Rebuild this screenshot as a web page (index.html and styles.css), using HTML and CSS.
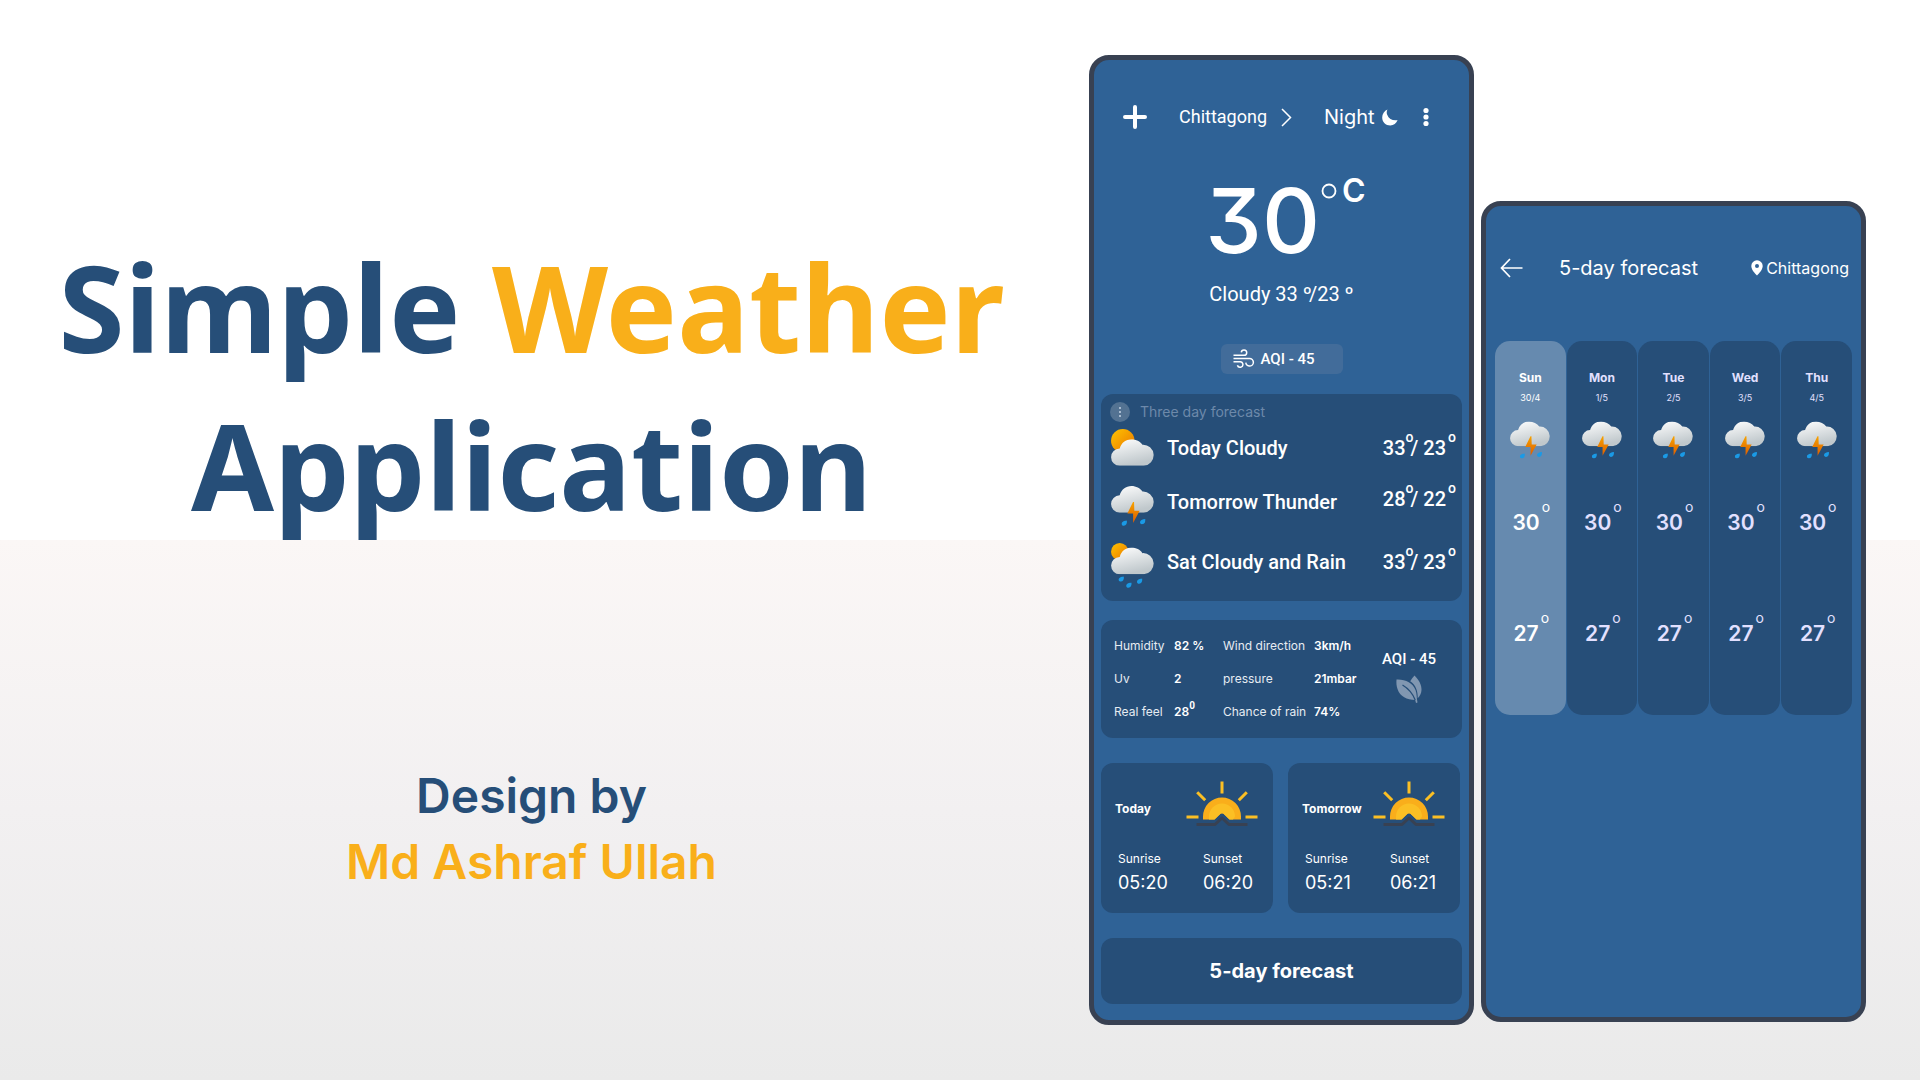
FILE: index.html
```html
<!DOCTYPE html>
<html lang="en">
<head>
<meta charset="utf-8">
<meta name="viewport" content="width=device-width, initial-scale=1">
<title>Simple Weather Application</title>
<link rel="stylesheet" href="styles.css">
</head>
<body>
<svg class="sprite" aria-hidden="true">
  <defs>
    <linearGradient id="cloud-fill" x1="0" y1="0" x2=".35" y2="1"><stop offset="0" stop-color="#ffffff"/><stop offset="1" stop-color="#c0c8cc"/></linearGradient>
    <linearGradient id="sun-fill" x1="0" y1="0" x2="1" y2="1"><stop offset="0" stop-color="#ffc400"/><stop offset=".7" stop-color="#ef8c00"/></linearGradient>
    <linearGradient id="bolt-fill" x1="0" y1="0" x2="0" y2="1"><stop offset="0" stop-color="#f7a300"/><stop offset="1" stop-color="#dc5c00"/></linearGradient>
  </defs>
  <symbol id="cloud" viewBox="0 0 42 26"><path fill="url(#cloud-fill)" d="M8.500 26A8.450 8.450 0 0 1 8.500 9.100C10 3.500 14.500 0 20 0c4.500 0 8.500 2.200 10.700 5.400A10.300 10.300 0 0 1 32 26z"/></symbol>
  <symbol id="drop" viewBox="0 0 6 6"><path fill="#1a9ae6" d="M5.800.2C6 3.500 4.900 5.800 2.500 5.800 1 5.800.1 4.800.1 3.600.1 1.700 2.500.4 5.800.2z"/></symbol>
  <symbol id="cloudy" viewBox="0 0 42 44"><circle cx="11.500" cy="11.500" r="11.500" fill="url(#sun-fill)"/><use href="#cloud" y="10" width="42" height="26"/></symbol>
  <symbol id="thunder" viewBox="0 0 42 39"><use href="#cloud" width="42" height="26"/><path fill="url(#bolt-fill)" d="M21.500 15.500 16 26.800h5.600V36L28 24.200h-5.200l-.3-8.700z"/><use href="#drop" x="10" y="33.500" width="6" height="5.500"/><use href="#drop" x="28" y="32" width="6" height="5.500"/></symbol>
  <symbol id="rain" viewBox="0 0 42 44"><circle cx="8.500" cy="8.500" r="8.500" fill="url(#sun-fill)"/><use href="#cloud" y="4.500" width="42" height="26"/><use href="#drop" x="7" y="32.500" width="6" height="5.500"/><use href="#drop" x="14.500" y="38.500" width="6" height="5.500"/><use href="#drop" x="25" y="34.500" width="6" height="5.500"/></symbol>
  <symbol id="sunrise" viewBox="0 0 72 46">
    <path fill="#f9ae1b" d="M17 38.500V35.500a19 19 0 0 1 38 0v3H43.500L37.500 32.800q-1.500-1.300-3 0L28.500 38.500z"/>
    <path fill="#fbbf24" d="M23 38.500V35.500a13 13 0 0 1 26 0l-2 3H43.500L37.500 32.800q-1.500-1.300-3 0L28.500 38.500z"/>
    <g fill="none" stroke="#fbbf24" stroke-width="3"><path d="M36 .5v12M11.200 11.200l8 8M60.800 11.200l-8 8M.5 36h12M59.500 36h12"/></g>
    <path fill="none" stroke="#384152" stroke-width="3" stroke-linejoin="round" d="M10.500 43.500H29l7-6.500 7 6.500h18.500"/>
  </symbol>
</svg>

<main class="page">
  <header class="hero">
    <h1 class="title">Simple <span class="accent">Weather</span> Application</h1>
    <p class="byline">Design by<br><span class="accent">Md Ashraf Ullah</span></p>
  </header>

  <div class="phones">
    <section class="phone today" aria-label="Current weather">
      <nav class="topbar">
        <button class="icon-button" aria-label="Add city"><svg width="24" height="24" viewBox="0 0 24 24"><path d="M12 2v20M2 12h20" fill="none" stroke="#fff" stroke-width="4" stroke-linecap="round"/></svg></button>
        <a class="city" href="#">Chittagong <svg width="11" height="19" viewBox="0 0 11 19"><path d="M1 1l8.500 8.500L1 18" fill="none" stroke="#fff" stroke-width="1.500"/></svg></a>
        <button class="mode">Night <svg width="16" height="17" viewBox="0 0 16 17"><path fill="#fff" d="M5.500.4C4.600 2 4.500 3.800 5.200 5.700c1.600 4.300 5.800 6.300 10.400 5.400C14.300 14.400 11.700 16.400 8.300 16.400 3.700 16.400.2 13 .2 8.400.2 4.800 2.300 1.700 5.500.4z"/></svg></button>
        <button class="icon-button more" aria-label="More"><svg width="6" height="20" viewBox="0 0 6 20"><g fill="#fff"><circle cx="3" cy="3.500" r="2.600"/><circle cx="3" cy="10" r="2.600"/><circle cx="3" cy="16.500" r="2.600"/></g></svg></button>
      </nav>

      <div class="now">
        <p class="temperature">30<span class="unit"><svg width="16" height="16" viewBox="0 0 16 16"><circle cx="8" cy="8" r="6.500" fill="none" stroke="#fff" stroke-width="1.800"/></svg>C</span></p>
        <p class="range">Cloudy 33 <span class="ring">º</span>/23 º</p>
        <p class="aqi-pill"><svg width="22" height="20" viewBox="0 0 22 20"><g fill="none" stroke="#fff" stroke-width="1.500"><path d="M.5 6.300H11a2.700 2.700 0 1 0-2.700-2.900M.5 9.500h16a3.800 3.800 0 1 1-3.700 4.200M.5 12.700h6.200a2.800 2.800 0 1 1-2.300 3.600"/></g></svg>AQI - 45</p>
      </div>

      <section class="card three-day">
        <h2 class="card-title"><span class="badge"><svg width="4" height="10" viewBox="0 0 4 10"><g fill="#a7bacf"><rect x="1" width="2" height="2"/><rect x="1" y="4" width="2" height="2"/><rect x="1" y="8" width="2" height="2"/></g></svg></span>Three day forecast</h2>
        <ul class="days">
          <li class="day"><svg width="43" height="45"><use href="#cloudy"/></svg><span>Today Cloudy</span><span class="temps">33<sup>o</sup>/ 23<sup>o</sup></span></li>
          <li class="day raised"><svg width="43" height="40"><use href="#thunder"/></svg><span>Tomorrow Thunder</span><span class="temps">28<sup>o</sup>/ 22<sup>o</sup></span></li>
          <li class="day"><svg width="43" height="45"><use href="#rain"/></svg><span>Sat Cloudy and Rain</span><span class="temps">33<sup>o</sup>/ 23<sup>o</sup></span></li>
        </ul>
      </section>

      <section class="card details">
        <dl class="stats">
          <dt>Humidity</dt><dd>82 %</dd><dt>Wind direction</dt><dd>3km/h</dd>
          <dt>Uv</dt><dd>2</dd><dt>pressure</dt><dd>21mbar</dd>
          <dt>Real feel</dt><dd>28<sup>0</sup></dd><dt>Chance of rain</dt><dd>74%</dd>
        </dl>
        <div class="air">AQI - 45
          <svg width="26" height="29" viewBox="0 0 26 29"><g fill="#8197b1"><path d="M.5 4.500C9 4 17 8 19.500 15c1.500 4 1 8 2 12.500l-1.500.5-.8-3C11 25 4 21.500 1.500 14 .5 11 .2 8 .5 4.500z"/><path d="M18.500.5C23 5 25.800 10 25.500 15c-.2 3.500-1.500 6-3.800 8.200C22 17 20 9.500 14.200 6.200 15.500 4 16.800 2.200 18.500.5z"/></g><path d="M6.500 10c5 3 10 8 12.700 15" fill="none" stroke="#264e78" stroke-width="1.300"/></svg>
        </div>
      </section>

      <div class="sun-cards">
        <section class="card sun">
          <h3>Today</h3><svg width="72" height="46"><use href="#sunrise"/></svg>
          <p>Sunrise<time>05:20</time></p><p>Sunset<time>06:20</time></p>
        </section>
        <section class="card sun">
          <h3>Tomorrow</h3><svg width="72" height="46"><use href="#sunrise"/></svg>
          <p>Sunrise<time>05:21</time></p><p>Sunset<time>06:21</time></p>
        </section>
      </div>

      <button class="card forecast-button">5-day forecast</button>
    </section>

    <section class="phone forecast" aria-label="5-day forecast">
      <header class="forecast-bar">
        <button class="icon-button" aria-label="Back"><svg width="23" height="20" viewBox="0 0 23 20"><path d="M10 1 1.500 10l8.500 9M1.500 10H22.500" fill="none" stroke="#fff" stroke-width="1.700"/></svg></button>
        <h2>5-day forecast</h2>
        <a class="place" href="#"><svg width="12" height="16" viewBox="0 0 12 16"><path fill="#fff" fill-rule="evenodd" d="M6 .3a5.700 5.700 0 0 1 5.700 5.700C11.700 9.500 8.500 13 6 15.500 3.500 13 .3 9.500.3 6A5.700 5.700 0 0 1 6 .3zM6 4a2 2 0 1 0 0 4 2 2 0 0 0 0-4z"/></svg>Chittagong</a>
      </header>
      <ol class="week">
        <li class="column active"><h3>Sun</h3><p class="date">30/4</p><svg width="40" height="38"><use href="#thunder"/></svg><p class="degree">30<sup>o</sup></p><p class="degree">27<sup>o</sup></p></li>
        <li class="column"><h3>Mon</h3><p class="date">1/5</p><svg width="40" height="38"><use href="#thunder"/></svg><p class="degree">30<sup>o</sup></p><p class="degree">27<sup>o</sup></p></li>
        <li class="column"><h3>Tue</h3><p class="date">2/5</p><svg width="40" height="38"><use href="#thunder"/></svg><p class="degree">30<sup>o</sup></p><p class="degree">27<sup>o</sup></p></li>
        <li class="column"><h3>Wed</h3><p class="date">3/5</p><svg width="40" height="38"><use href="#thunder"/></svg><p class="degree">30<sup>o</sup></p><p class="degree">27<sup>o</sup></p></li>
        <li class="column"><h3>Thu</h3><p class="date">4/5</p><svg width="40" height="38"><use href="#thunder"/></svg><p class="degree">30<sup>o</sup></p><p class="degree">27<sup>o</sup></p></li>
      </ol>
    </section>
  </div>
</main>
</body>
</html>
```

FILE: styles.css
```css
* { box-sizing: border-box; }
body, h1, h2, h3, p, ul, ol, dl, dd { margin: 0; padding: 0; }
ul, ol { list-style: none; }
body { font-family: Inter, sans-serif; color: #fff; }
svg { display: block; flex: none; }
button { border: 0; padding: 0; background: none; color: inherit; font: inherit; cursor: pointer; }
a { color: inherit; text-decoration: none; }
sup { line-height: 0; vertical-align: baseline; position: relative; }
.sprite { position: absolute; width: 0; height: 0; }

.page {
  display: flex;
  min-height: 100vh;
  padding: 55px 54px 55px 0;
  background: linear-gradient(#fbf7f6, #f2f0f1 50%, #eaeaea) 0 100% / 100% 50% no-repeat #fff;
}

.hero { flex: 1; padding: 173px 26px 0 0; text-align: center; color: #264e78; }
.title { font: 700 120px/158px "Noto Sans", sans-serif; max-width: 1000px; margin: 0 auto; }
.byline { margin-top: 219px; font-size: 48px; line-height: 66px; font-weight: 600; }
.accent { color: #f9af1a; }

.phones { display: flex; align-items: flex-start; gap: 7px; }
.phone { width: 385px; border: 5px solid #384152; border-radius: 20px; background: #2f6296; }
.card { border-radius: 12px; background: #264e78; }

.today { padding: 0 7px 16px; }
.topbar { display: flex; align-items: center; height: 40px; margin: 37px 33px 0 22px; }
.city { display: flex; align-items: center; gap: 14px; margin-left: 32px; font: 400 18px/24px Roboto, sans-serif; }
.mode { display: flex; align-items: center; gap: 7px; margin-left: 32px; font-size: 20px; font-weight: 400; line-height: 24px; }
.more { margin-left: auto; }
.icon-button { display: block; }

.now { display: flex; flex-direction: column; align-items: center; }
.temperature { display: flex; margin-top: 28px; padding-left: 8px; font-size: 90px; line-height: 112px; font-weight: 500; font-feature-settings: "cv09"; }
.unit { display: flex; align-items: center; gap: 5px; height: 32px; margin: 10px 0 0 1px; font-size: 32px; line-height: 32px; font-weight: 600; }
.range { font: 400 20px/24px Roboto, sans-serif; margin-top: 5px; }
.ring { margin-right: -3px; }
.aqi-pill { display: flex; align-items: center; gap: 6px; width: 122px; height: 30px; margin: 38px 0 20px 0; padding-left: 12px; border-radius: 6px; background: #426c9a; font: 500 15px/30px Roboto, sans-serif; }

.three-day { padding: 8px 6px 12px 9px; }
.card-title { display: flex; align-items: center; gap: 10px; font-size: 14px; line-height: 20px; font-weight: 400; color: #6d89aa; }
.badge { display: grid; place-items: center; width: 20px; height: 20px; border-radius: 50%; background: #537292; }
.days { margin-top: 7px; }
.day { display: flex; align-items: flex-start; gap: 13px; height: 57px; font: 500 20px/38px Roboto, sans-serif; }
.day svg { margin-left: 1px; }
.day:last-child { height: 46px; }
.raised { line-height: 32px; }
.raised .temps { line-height: 26px; }
.temps { margin-left: auto; white-space: nowrap; }
.temps sup { font-size: 14px; top: -13px; margin-right: -3px; }
.temps sup:last-child { margin-right: 0; margin-left: 2px; }

.details { display: flex; margin-top: 19px; padding: 9px 0 10px 13px; }
.stats { display: grid; grid-template-columns: 60px 49px 91px 60px; grid-auto-rows: 33px; font-size: 12px; line-height: 33px; }
.stats dt { font-weight: 400; color: #e6ecf2; }
.stats dd { font-weight: 600; }
.stats sup { top: -7px; font: 700 10px/0 Roboto, sans-serif; }
.air { display: flex; flex-direction: column; align-items: center; gap: 6px; flex: 1; padding: 20px 18px 0 0; font: 500 15px/20px Roboto, sans-serif; }

.sun-cards { display: grid; grid-template-columns: repeat(2, minmax(0, 1fr)); gap: 15px; margin: 25px 2px 25px 0; }
.sun { display: grid; grid-template-columns: 85px minmax(0, 1fr); align-content: start; height: 150px; padding: 18px 15px 0 17px; font-size: 12px; font-weight: 400; line-height: 16px; }
.sun h3 { align-self: center; margin-left: -3px; font-size: 12px; font-weight: 700; padding-top: 10px; }
.sun svg { justify-self: end; }
.sun p { padding-top: 24px; }
.sun time { display: block; margin-top: 4px; font-size: 18px; font-weight: 400; line-height: 24px; }
.forecast-button { display: block; width: 100%; padding: 21px 0; font-size: 20px; line-height: 24px; font-weight: 700; }

.forecast { min-height: 76vh; margin-top: 146px; padding: 0 9px; }
.forecast-bar { display: flex; align-items: center; margin: 47px 3px 0 5px; height: 30px; }
.forecast-bar h2 { margin-left: 36px; font-size: 20px; font-weight: 400; line-height: 30px; }
.place { display: flex; align-items: center; gap: 3px; margin-left: auto; font-size: 16px; font-weight: 400; line-height: 30px; }
.week { display: grid; grid-template-columns: repeat(5, 1fr); gap: 1px; margin-top: 58px; }
.column { display: flex; flex-direction: column; align-items: center; padding: 29px 0 66px; border-radius: 15px; background: #264e78; color: #e2e0ff; }
.column.active { background: #668aaf; color: #fff; }
.column h3 { font-size: 12px; line-height: 16px; font-weight: 700; }
.date { margin: 6px 0 17px; font-size: 9px; line-height: 12px; font-weight: 400; }
.degree { margin-top: 49px; padding-left: 2px; font-size: 21px; line-height: 30px; font-weight: 600; }
.degree + .degree { margin-top: 81px; }
.degree sup { top: -18px; margin-left: 2px; font-size: 14px; font-weight: 400; }
```
